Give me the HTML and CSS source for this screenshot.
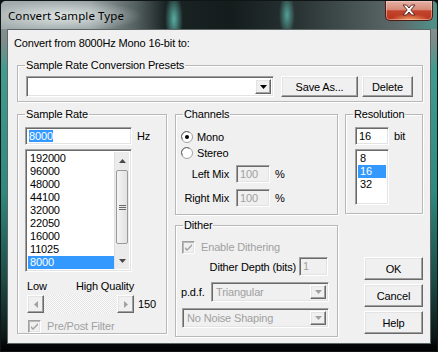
FILE: index.html
```html
<!DOCTYPE html>
<html>
<head>
<meta charset="utf-8">
<link rel="stylesheet" href="styles.css">
</head>
<body>
<div class="window">
  <div class="titlebar">
    <span class="title">Convert Sample Type</span>
    <div class="close">
      <svg width="16" height="12" viewBox="0 0 16 12"><path d="M2 1h3.5l2.5 3 2.5-3H14l-4.2 5 4.2 5h-3.5L8 8 5.5 11H2l4.2-5z" fill="#fff" stroke="#5a2a22" stroke-width="1"/></svg>
    </div>
  </div>
  <div class="client">
    <div class="intro">Convert from 8000Hz Mono 16-bit to:</div>

    <fieldset class="group presets">
      <legend>Sample Rate Conversion Presets</legend>
      <div class="presets-row">
        <div class="combo sunken combo-presets">
          <span class="combo-text"></span>
          <span class="drop btn"><svg width="7" height="4" viewBox="0 0 7 4"><path d="M0 0h7L3.5 4z" fill="#000"/></svg></span>
        </div>
        <div class="btn pushbtn saveas">Save As...</div>
        <div class="btn pushbtn delete">Delete</div>
      </div>
    </fieldset>

    <div class="lower">
      <fieldset class="group samplerate">
        <legend>Sample Rate</legend>
        <div class="sr-inner">
          <div class="edit-row">
            <div class="edit sunken sr-edit"><span class="sel">8000</span></div>
            <span class="unit">Hz</span>
          </div>
          <div class="listbox sunken sr-list">
            <div class="items">
              <div class="item">192000</div>
              <div class="item">96000</div>
              <div class="item">48000</div>
              <div class="item">44100</div>
              <div class="item">32000</div>
              <div class="item">22050</div>
              <div class="item">16000</div>
              <div class="item">11025</div>
              <div class="item selected">8000</div>
              <div class="item partial">6000</div>
            </div>
            <div class="vscroll">
              <div class="arrow"><svg width="7" height="4" viewBox="0 0 7 4"><path d="M0 4h7L3.5 0z" fill="#4a4a4a"/></svg></div>
              <div class="track">
                <div class="thumb"><span class="grip"></span><span class="grip"></span><span class="grip"></span></div>
              </div>
              <div class="arrow"><svg width="7" height="4" viewBox="0 0 7 4"><path d="M0 0h7L3.5 4z" fill="#4a4a4a"/></svg></div>
            </div>
          </div>
          <div class="quality-labels"><span>Low</span><span>High Quality</span></div>
          <div class="slider-row">
            <div class="hscroll">
              <div class="btn sbtn"><svg width="4" height="7" viewBox="0 0 4 7"><path d="M4 0v7L0 3.5z" fill="#a0a0a0"/></svg></div>
              <div class="htrack"></div>
              <div class="btn sbtn"><svg width="4" height="7" viewBox="0 0 4 7"><path d="M0 0v7L4 3.5z" fill="#a0a0a0"/></svg></div>
            </div>
            <span class="val">150</span>
          </div>
          <div class="check-row disabled">
            <span class="checkbox"><svg width="9" height="9" viewBox="0 0 9 9"><path d="M1 4l2 2 5-5v2L3 8 1 6z" fill="#a0a0a0"/></svg></span>
            <span>Pre/Post Filter</span>
          </div>
        </div>
      </fieldset>

      <div class="midcol">
        <fieldset class="group channels">
          <legend>Channels</legend>
          <div class="ch-inner">
            <div class="radio-row">
              <svg class="radio" width="12" height="12" viewBox="0 0 12 12"><circle cx="6" cy="6" r="5.5" fill="#fff" stroke="#a0a0a0"/><path d="M1.5 8.5A5 5 0 0 1 8.5 1.5" fill="none" stroke="#6a6a6a"/><circle cx="6" cy="6" r="2" fill="#000"/></svg>
              <span>Mono</span>
            </div>
            <div class="radio-row">
              <svg class="radio" width="12" height="12" viewBox="0 0 12 12"><circle cx="6" cy="6" r="5.5" fill="#fff" stroke="#a0a0a0"/><path d="M1.5 8.5A5 5 0 0 1 8.5 1.5" fill="none" stroke="#6a6a6a"/></svg>
              <span>Stereo</span>
            </div>
            <div class="mix-row first">
              <span class="mix-label">Left Mix</span>
              <div class="edit sunken dis mix-edit">100</div>
              <span class="pct">%</span>
            </div>
            <div class="mix-row">
              <span class="mix-label">Right Mix</span>
              <div class="edit sunken dis mix-edit">100</div>
              <span class="pct">%</span>
            </div>
          </div>
        </fieldset>

        <fieldset class="group dither">
          <legend>Dither</legend>
          <div class="di-inner">
            <div class="check-row disabled dith-check">
              <span class="checkbox"><svg width="9" height="9" viewBox="0 0 9 9"><path d="M1 4l2 2 5-5v2L3 8 1 6z" fill="#a0a0a0"/></svg></span>
              <span>Enable Dithering</span>
            </div>
            <div class="depth-row">
              <span>Dither Depth (bits)</span>
              <div class="edit sunken dis depth-edit">1</div>
            </div>
            <div class="pdf-row">
              <span class="pdf-label">p.d.f.</span>
              <div class="combo sunken dis combo-pdf">
                <span class="combo-text">Triangular</span>
                <span class="drop btn"><svg width="7" height="4" viewBox="0 0 7 4"><path d="M0 0h7L3.5 4z" fill="#a0a0a0"/></svg></span>
              </div>
            </div>
            <div class="combo sunken dis combo-noise">
              <span class="combo-text">No Noise Shaping</span>
              <span class="drop btn"><svg width="7" height="4" viewBox="0 0 7 4"><path d="M0 0h7L3.5 4z" fill="#a0a0a0"/></svg></span>
            </div>
          </div>
        </fieldset>
      </div>

      <div class="rightcol">
        <fieldset class="group resolution">
          <legend>Resolution</legend>
          <div class="res-inner">
            <div class="edit-row">
              <div class="edit sunken res-edit">16</div>
              <span class="unit">bit</span>
            </div>
            <div class="listbox sunken res-list">
              <div class="items">
                <div class="item">8</div>
                <div class="item selected">16</div>
                <div class="item">32</div>
              </div>
            </div>
          </div>
        </fieldset>
        <div class="buttons">
          <div class="btn pushbtn dlg">OK</div>
          <div class="btn pushbtn dlg">Cancel</div>
          <div class="btn pushbtn dlg">Help</div>
        </div>
      </div>
    </div>
  </div>
</div>
</body>
</html>
```

FILE: styles.css
```css
* { box-sizing: border-box; }
html, body { margin: 0; padding: 0; background: #0c1212; }
body { width: 438px; height: 352px; overflow: hidden; }

.window {
  width: 438px;
  height: 352px;
  display: flex;
  flex-direction: column;
  border: 1px solid #101616;
  border-radius: 6px 6px 0 0;
  background:
    linear-gradient(to bottom, rgba(0,0,0,0) 0, rgba(0,0,0,0) 336px, #050808 344px, #000 352px),
    linear-gradient(to bottom, #8f9999 0, #7e8c8a 40px, #3f9c8f 70px, #2e8a7e 190px, #1d4a44 280px, #0b1414 340px);
  font-family: "Liberation Sans", Arial, sans-serif;
  font-size: 11px;
  letter-spacing: -0.15px;
  color: #000;
  overflow: hidden;
}

.titlebar {
  height: 28px;
  display: flex;
  justify-content: space-between;
  align-items: flex-start;
  margin: 0 -1px;
  background:
    radial-gradient(ellipse 9px 26px at 174px 18px, rgba(110,220,205,0.75), rgba(110,220,205,0) 100%),
    radial-gradient(ellipse 8px 22px at 287px 14px, rgba(110,220,205,0.65), rgba(110,220,205,0) 100%),
    radial-gradient(ellipse 80px 16px at 62px 15px, rgba(230,236,236,0.9), rgba(230,236,236,0) 100%),
    linear-gradient(90deg, #a4adad 0, #98a2a2 90px, #566262 135px, #1b2424 165px, #141c1c 230px, #2a3434 300px, #4a5656 360px, #5f6b6b 400px, #4f8f88 432px);
}

.title {
  font-family: "Noto Sans", "Open Sans", sans-serif;
  font-size: 11.5px;
  letter-spacing: 0.1px;
  color: #000;
  margin: 7px 0 0 8px;
}

.close {
  width: 48px;
  height: 20px;
  margin-right: 5px;
  border: 1px solid #4a1c14;
  border-top: none;
  border-radius: 0 0 5px 5px;
  background:
    radial-gradient(ellipse 20px 6px at 24px 19px, rgba(255,190,120,0.8), rgba(255,190,120,0)),
    linear-gradient(to bottom, #e6b2a6 0, #d88a78 45%, #c2442c 52%, #b8341e 100%);
  box-shadow: inset 0 0 0 1px rgba(255,220,210,0.45);
  display: flex;
  align-items: center;
  justify-content: center;
  padding-bottom: 1px;
}

.client {
  margin: 0 6px 0 6px;
  height: 315px;
  border: 1px solid #5c6868;
  background: #f0f0f0;
  display: flex;
  flex-direction: column;
  padding: 0 7px 0 9px;
}

.intro {
  line-height: 13px;
  margin-top: 7px;
  margin-left: -3px;
}

/* group boxes */
.group {
  margin: 0;
  padding: 0;
  border: 1px solid #b8b8b8;
  box-shadow: inset 1px 1px 0 #fff, 1px 1px 0 #fff;
  min-width: 0;
}
.group legend {
  padding: 0 1px;
  margin-left: 7px;
  line-height: 13px;
  font-size: 11px;
}

.presets {
  margin-top: 9px;
  height: 43px;
}
.presets-row {
  display: flex;
  align-items: flex-start;
  padding: 4px 0 0 8px;
}

/* 3D styles */
.sunken {
  border: 1px solid;
  border-color: #a0a0a0 #fff #fff #a0a0a0;
  box-shadow: inset 1px 1px 0 #696969, inset -1px -1px 0 #e3e3e3;
  background: #fff;
}
.sunken.dis { background: #f0f0f0; color: #a0a0a0; }

.btn {
  border: 1px solid;
  border-color: #fff #696969 #696969 #fff;
  box-shadow: inset -1px -1px 0 #a0a0a0, inset 1px 1px 0 #e3e3e3;
  background: #f0f0f0;
}

.pushbtn {
  display: flex;
  align-items: center;
  justify-content: center;
  height: 21px;
}
.saveas { width: 77px; margin-left: 7px; }
.delete { width: 51px; margin-left: 4px; }

.combo {
  display: flex;
  align-items: stretch;
  padding: 2px;
  height: 21px;
}
.combo-text { flex: 1; padding-left: 2px; line-height: 15px; }
.drop {
  width: 16px;
  display: flex;
  align-items: center;
  justify-content: center;
}
.combo-presets { width: 248px; }

/* lower section */
.lower {
  display: flex;
  align-items: flex-start;
  margin-top: 6px;
}

.samplerate { width: 150px; height: 226px; }
.sr-inner { padding: 6px 0 0 7px; }

.edit-row { display: flex; align-items: center; }
.edit {
  height: 18px;
  padding: 2px 3px;
  line-height: 13px;
}
.sr-edit { width: 107px; }
.sel { background: #3399ff; color: #fff; }
.unit { margin-left: 5px; }

.listbox {
  display: flex;
  padding: 2px;
  overflow: hidden;
}
.sr-list { width: 107px; height: 123px; margin-top: 4px; }
.items { flex: 1; overflow: hidden; }
.item { height: 13px; line-height: 13px; padding-left: 2px; }
.item.selected { background: #3399ff; color: #fff; }
.item.partial { height: 2px; overflow: hidden; }

.vscroll {
  width: 15px;
  display: flex;
  flex-direction: column;
  background: #ebebeb;
  border-left: 1px solid #e0e0e0;
}
.vscroll .arrow {
  height: 17px;
  display: flex;
  align-items: center;
  justify-content: center;
}
.track { flex: 1; padding-top: 1px; }
.thumb {
  height: 74px;
  margin: 0 1px;
  border: 1px solid #9a9a9a;
  border-radius: 2px;
  background: linear-gradient(90deg, #f4f4f4, #e2e2e2);
  display: flex;
  flex-direction: column;
  align-items: center;
  justify-content: center;
  gap: 1px;
}
.grip { width: 7px; height: 1px; background: #6a6a6a; }

.quality-labels {
  display: flex;
  justify-content: space-between;
  width: 107px;
  margin: 8px 0 0 2px;
  line-height: 13px;
}

.slider-row { display: flex; align-items: center; margin-top: 2px; margin-left: 2px; }
.hscroll { display: flex; width: 107px; height: 18px; }
.sbtn { width: 17px; display: flex; align-items: center; justify-content: center; }
.htrack {
  flex: 1;
  background-color: #f6f6f6;
  background-image: repeating-conic-gradient(#e4e4e4 0 25%, #fbfbfb 0 50%);
  background-size: 2px 2px;
}
.val { margin-left: 4px; }

.check-row { display: flex; align-items: center; line-height: 13px; }
.samplerate .check-row { margin: 7px 0 0 3px; }
.disabled { color: #a0a0a0; }
.checkbox {
  width: 13px; height: 13px;
  border: 1px solid;
  border-color: #a0a0a0 #fff #fff #a0a0a0;
  box-shadow: inset 1px 1px 0 #b8b8b8, inset -1px -1px 0 #e3e3e3;
  background: #f0f0f0;
  display: flex; align-items: center; justify-content: center;
  margin-right: 6px;
}

.midcol {
  display: flex;
  flex-direction: column;
  margin-left: 8px;
  width: 163px;
}
.channels { height: 107px; }
.ch-inner { padding: 9px 0 0 5px; }
.radio-row { display: flex; align-items: center; height: 13px; margin-bottom: 3px; }
.radio { margin-right: 4px; }
.mix-row { display: flex; align-items: center; margin-top: 6px; }
.mix-row.first { margin-top: 6px; }
.mix-label { width: 48px; text-align: right; }
.mix-edit { width: 34px; height: 18px; margin-left: 7px; }
.pct { margin-left: 5px; }

.dither { margin-top: 4px; height: 118px; }
.di-inner { padding: 8px 0 0 6px; }
.dith-check { margin-top: 1px; }
.depth-row {
  display: flex;
  align-items: center;
  justify-content: flex-end;
  margin: 3px 9px 0 0;
}
.depth-edit { width: 29px; height: 19px; margin-left: 3px; }
.pdf-row { display: flex; align-items: center; margin-top: 6px; }
.pdf-label { width: 30px; margin-left: -1px; }
.combo-pdf { width: 118px; height: 20px; }
.combo-noise { width: 147px; height: 20px; margin-top: 6px; }

.rightcol {
  display: flex;
  flex-direction: column;
  align-items: flex-end;
  margin-left: 7px;
  width: 78px;
}
.resolution { width: 78px; height: 106px; }
.res-inner { padding: 6px 0 0 9px; }
.res-edit { width: 34px; }
.res-list { width: 34px; height: 56px; margin-top: 4px; }

.buttons { display: flex; flex-direction: column; gap: 4px; margin-top: 43px; }
.dlg { width: 59px; height: 23px; }
```
